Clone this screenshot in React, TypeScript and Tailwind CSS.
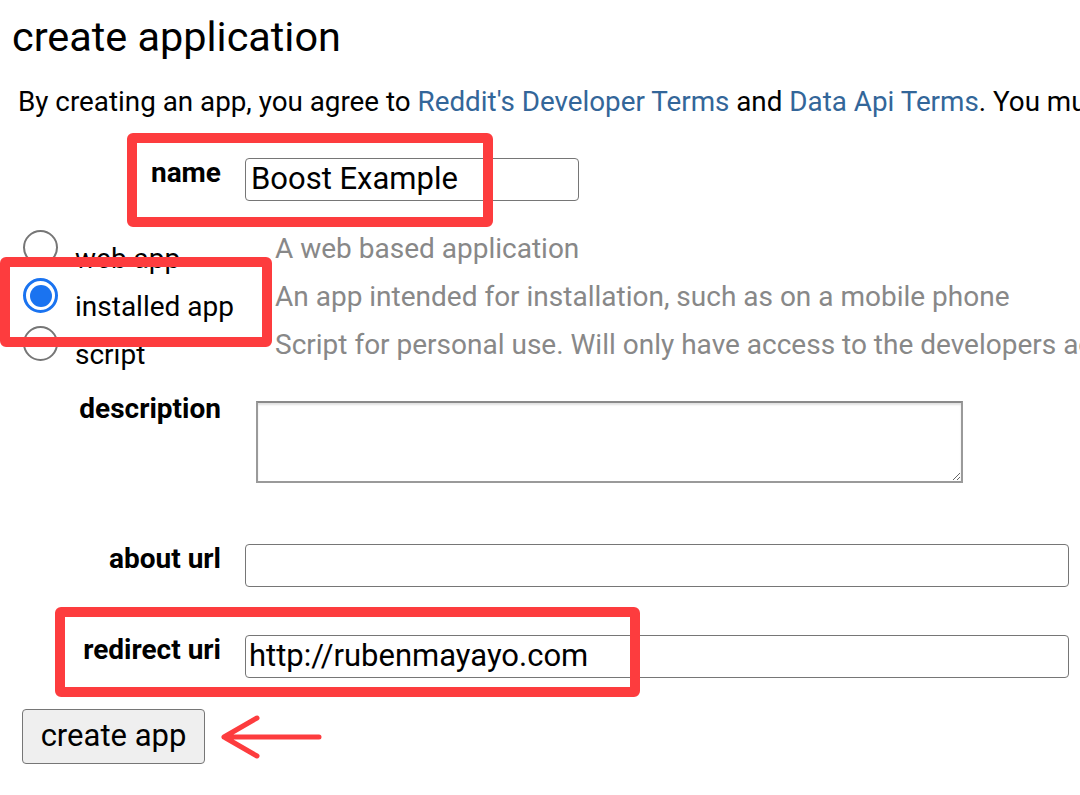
import React from "react";

const apps = [
  { id: "web", label: "web app", desc: "A web based application" },
  {
    id: "installed",
    label: "installed app",
    desc: "An app intended for installation, such as on a mobile phone",
  },
  {
    id: "script",
    label: "script",
    desc: "Script for personal use. Will only have access to the developers accounts",
  },
];

const Radio = ({ checked }: { checked: boolean }) =>
  checked ? (
    <span className="flex h-[35px] w-[35px] shrink-0 items-center justify-center rounded-full border-[3px] border-[#1a73f0] bg-white">
      <span className="block h-[22px] w-[22px] rounded-full bg-[#1a73f0]" />
    </span>
  ) : (
    <span className="block h-[35px] w-[35px] shrink-0 rounded-full border-2 border-[#767676] bg-white" />
  );

const Annotation = ({ className }: { className: string }) => (
  <div
    className={`pointer-events-none absolute rounded-[6px] border-[10px] border-[#fd3c3e] ${className}`}
  />
);

const App = () => {
  const selected = "installed";

  return (
    <div className="relative h-[795px] w-[1080px] overflow-hidden bg-white font-['Roboto',sans-serif] text-black whitespace-nowrap">
      <h1 className="pl-3 pt-[13px] text-[41.4px] leading-[1.2] font-normal">
        create application
      </h1>
      <p className="mt-[22px] pl-[18px] text-[27.8px] leading-[1.2]">
        By creating an app, you agree to{" "}
        <a className="text-[#336699]">Reddit's Developer Terms</a> and{" "}
        <a className="text-[#336699]">Data Api Terms</a>. You must also register
        to use the API.
      </p>

      <div className="mt-[40px] flex items-start">
        <label className="w-[221px] text-right text-[28px] leading-[30px] font-bold">
          name
        </label>
        <input
          defaultValue="Boost Example"
          className="ml-[24px] h-[43px] w-[334px] rounded-[4px] border border-[#767676] px-[5px] text-[31px] outline-none"
        />
      </div>

      <div className="mt-[29px] flex items-start">
        <div className="w-[275px] shrink-0">
          {apps.map((app) => (
            <div key={app.id} className="flex h-[48px] items-start">
              <span className="ml-[23px] block">
                <Radio checked={app.id === selected} />
              </span>
              <span className="ml-[17px] pt-[12px] text-[28px] leading-[1.2]">
                {app.label}
              </span>
            </div>
          ))}
        </div>
        <div className="text-[28px] text-[#888888]">
          {apps.map((app) => (
            <div key={app.id} className="h-[48px] pt-[4px] leading-[30px]">
              {app.desc}
            </div>
          ))}
        </div>
      </div>

      <div className="mt-[27px] flex items-start">
        <label className="w-[221px] text-right text-[28px] leading-[16px] font-bold">
          description
        </label>
        <textarea className="ml-[35px] h-[82px] w-[707px] border-2 border-[#9a9a9a] border-t-[#8a8a8a] bg-white shadow-[inset_0_2px_2px_rgba(0,0,0,0.12)] outline-none" />
      </div>

      <div className="mt-[61px] flex items-start">
        <label className="w-[221px] text-right text-[28px] leading-[30px] font-bold">
          about url
        </label>
        <input className="ml-[24px] h-[43px] w-[824px] rounded-[4px] border border-[#767676] px-[5px] text-[31px] outline-none" />
      </div>

      <div className="mt-[48px] flex items-start">
        <label className="w-[221px] text-right text-[28px] leading-[30px] font-bold">
          redirect uri
        </label>
        <input
          defaultValue="http://rubenmayayo.com"
          className="ml-[24px] h-[43px] w-[824px] rounded-[4px] border border-[#767676] px-[3px] text-[31px] outline-none"
        />
      </div>

      <div className="mt-[31px] flex items-center pl-[22px]">
        <button className="h-[55px] w-[183px] rounded-[4px] border border-[#767676] bg-[#efefef] text-[31px]">
          create app
        </button>
        <svg width="110" height="50" viewBox="0 0 110 50" className="ml-[14px]">
          <path
            d="M5 25 H100 M5 25 L38 6 M5 25 L38 44"
            stroke="#fd3c3e"
            strokeWidth="5"
            strokeLinecap="round"
            fill="none"
          />
        </svg>
      </div>

      <Annotation className="left-[127px] top-[133px] h-[94px] w-[366px]" />
      <Annotation className="left-0 top-[257px] h-[90px] w-[272px]" />
      <Annotation className="left-[55px] top-[607px] h-[90px] w-[585px]" />
    </div>
  );
};

export default App;
